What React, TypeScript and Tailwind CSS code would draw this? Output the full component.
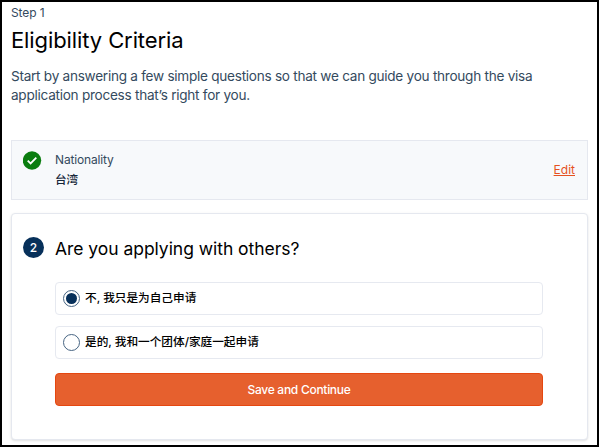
import { useState } from 'react';
import clsx from 'clsx';

const OPTIONS = ['不, 我只是为自己申请', '是的, 我和一个团体/家庭一起申请'];

const CheckBadge = () => (
  <svg width="19" height="19" viewBox="0 0 19 19" fill="none" className="shrink-0">
    <circle cx="9" cy="9.5" r="9.2" fill="#0b7d10" />
    <path d="M4.7 9.6 7.6 12.4 13.3 6.7" stroke="#fff" strokeWidth="1.8" />
  </svg>
);

type RadioCardProps = {
  label: string;
  checked: boolean;
  onSelect: () => void;
};

const RadioCard = ({ label, checked, onSelect }: RadioCardProps) => (
  <button
    type="button"
    role="radio"
    aria-checked={checked}
    onClick={onSelect}
    className="flex h-[33px] w-full items-center rounded-[4px] border border-[#e6e9f0] bg-white pl-[7px] text-left"
  >
    <span className="flex size-[17px] shrink-0 items-center justify-center rounded-full border border-[#476583]">
      <span className={clsx('size-[11px] rounded-full', checked && 'bg-[#07305a]')} />
    </span>
    <span className="ml-[5px] pt-px text-[11.65px] font-medium text-black">{label}</span>
  </button>
);

export default function App() {
  const [selected, setSelected] = useState(0);

  return (
    <main className="h-[447px] w-[599px] overflow-hidden border-2 border-black bg-white pr-[9px] pl-[9px] font-['Inter','Noto_Sans_CJK_SC',sans-serif] text-[#344a5e]">
      <p className="mt-[2px] text-[12px] leading-[18px] tracking-[-0.1px]">Step 1</p>
      <h1 className="mt-[3px] text-[22px] leading-[30px] tracking-[-0.1px] text-black">
        Eligibility Criteria
      </h1>
      <p className="mt-[12px] text-[13.6px] leading-[19px] tracking-[-0.27px]">
        Start by answering a few simple questions so that we can guide you through the visa
        <br />
        application process that’s right for you.
      </p>

      <section className="mt-[35px] flex h-[60px] w-[577px] border border-[#e5e8ef] bg-[#f7f9fb] pr-[12px] pl-[11px]">
        <div className="pt-[10px]">
          <CheckBadge />
        </div>
        <div className="ml-[13px] pt-[9px] text-[12px] leading-[20px]">
          <p className="tracking-[-0.15px]">Nationality</p>
          <p className="text-[11.6px] font-medium text-[#16283a]">台湾</p>
        </div>
        <a
          href="#"
          className="ml-auto self-center text-[12px] text-[#e5511f] underline"
        >
          Edit
        </a>
      </section>

      <section className="mt-[13px] flex h-[227px] w-[577px] rounded-[4px] border border-[#e5e8ef] bg-white pl-[11px] shadow-sm">
        <span className="mt-[23px] flex size-[21px] shrink-0 items-center justify-center rounded-full bg-[#07305a] text-[12px] font-medium text-white">
          2
        </span>
        <div className="ml-[11px] w-[488px] pt-[22px]">
          <h2 className="text-[17.5px] leading-[26px] tracking-[-0.04px] text-black">
            Are you applying with others?
          </h2>
          <div role="radiogroup" className="mt-[20px] flex flex-col gap-[11px]">
            {OPTIONS.map((label, i) => (
              <RadioCard
                key={label}
                label={label}
                checked={selected === i}
                onSelect={() => setSelected(i)}
              />
            ))}
          </div>
          <button
            type="button"
            className="mt-[14px] h-[33px] w-full rounded-[4px] border border-[#e54710] bg-[#e6602e] text-[12px] font-medium tracking-[-0.28px] text-white"
          >
            Save and Continue
          </button>
        </div>
      </section>
    </main>
  );
}
